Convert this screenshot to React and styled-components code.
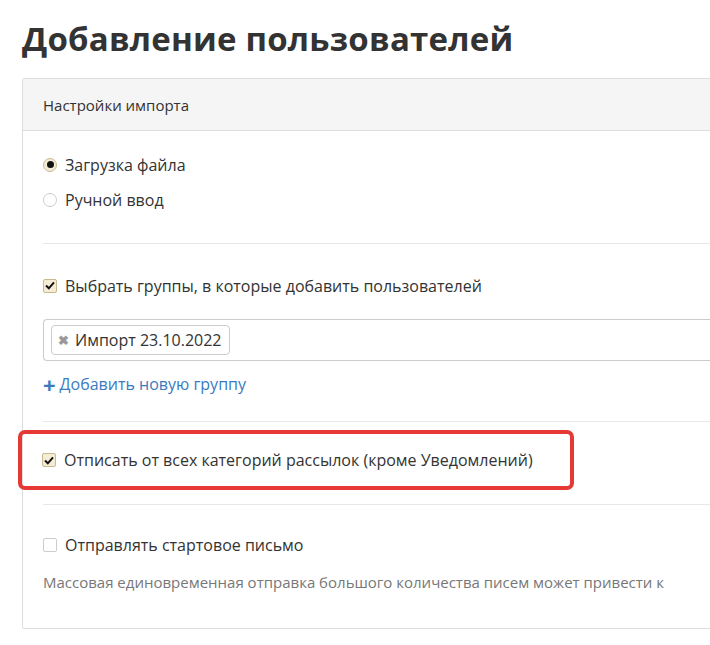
import React from "react";
import styled, { createGlobalStyle } from "styled-components";

const Global = createGlobalStyle`
  html, body { margin: 0; padding: 0; background: #fff; overflow: hidden; }
  body { font-family: "Open Sans", "Liberation Sans", sans-serif; color: #333; }
`;
const Page = styled.div`padding: 14px 0 0 22px; width: 760px;`;
const Title = styled.h1`
  margin: 0 0 14px; font-size: 33px; font-weight: 700; color: #333; line-height: 50px; letter-spacing: 0.2px;
`;
const Panel = styled.div`border: 1px solid #ddd; border-radius: 2px; width: 720px;`;
const Header = styled.div`
  background: #f5f5f5; border-bottom: 1px solid #ddd; height: 51px; display: flex; align-items: center;
  padding-left: 20px; font-size: 15px; color: #333;
`;
const Body = styled.div`padding: 16px 0 36px 20px;`;
const Row = styled.label`
  display: flex; align-items: center; gap: 8px; height: 35px; font-size: 16px; color: #333;
`;
const Radio = styled.span`
  width: 14px; height: 14px; border-radius: 50%; box-sizing: border-box;
  border: 1px solid ${p => (p.$on ? "#c9b890" : "#ccc")}; background: ${p => (p.$on ? "#f5ecd6" : "#fff")};
  display: flex; align-items: center; justify-content: center;
  &::after { content: ""; width: 7px; height: 7px; border-radius: 50%; background: #111; display: ${p => (p.$on ? "block" : "none")}; }
`;
const Box = styled.span`
  width: 14px; height: 14px; border-radius: 2px; box-sizing: border-box;
  border: 1px solid ${p => (p.$on ? "#c9b890" : "#ccc")}; background: ${p => (p.$on ? "#f5ecd6" : "#fff")};
  display: flex; align-items: center; justify-content: center;
`;
const Hr = styled.div`height: 1px; background: #e8e8e8; margin: ${p => p.$m};`;
const Input = styled.div`
  margin-top: 16px; height: 40px; border: 1px solid #ccc; border-radius: 4px; border-right: none;
  display: flex; align-items: center; padding-left: 7px;
`;
const Tag = styled.span`
  display: flex; align-items: center; gap: 6px; border: 1px solid #ccc; border-radius: 4px;
  height: 28px; padding: 0 7px 0 6px; font-size: 16px; color: #333;
`;
const X = styled.span`color: #999; font-size: 13px; font-weight: 700;`;
const Link = styled.div`
  margin-top: 12px; display: flex; align-items: center; gap: 4px; color: #3a7bbf; font-size: 16px;
`;
const Plus = styled.span`color: #3a7bbf; font-size: 22px; font-weight: 700; line-height: 16px;`;
const Highlight = styled.div`
  margin: 8px 0 0 -25px; width: 528px; height: 52px; border: 4px solid #e53935; border-radius: 7px;
  display: flex; align-items: center; padding-left: 20px;
`;
const Note = styled.div`margin-top: 10px; font-size: 15px; color: #777; white-space: nowrap; overflow: hidden; width: 666px;`;

const Check = () => (
  <svg width="10" height="9" viewBox="0 0 10 9"><path d="M1 4.5 L3.8 7.3 L9 1.3" stroke="#111" strokeWidth="2" fill="none" /></svg>
);

export default function App() {
  return (
    <Page>
      <Global />
      <Title>Добавление пользователей</Title>
      <Panel>
        <Header>Настройки импорта</Header>
        <Body>
          <Row><Radio $on />Загрузка файла</Row>
          <Row><Radio />Ручной ввод</Row>
          <Hr $m="26px 0 24px" />
          <Row><Box $on><Check /></Box>Выбрать группы, в которые добавить пользователей</Row>
          <Input><Tag><X>✖</X>Импорт 23.10.2022</Tag></Input>
          <Link><Plus>+</Plus>Добавить новую группу</Link>
          <Hr $m="26px 0 0" />
          <Highlight><Row><Box $on><Check /></Box>Отписать от всех категорий рассылок (кроме Уведомлений)</Row></Highlight>
          <Hr $m="14px 0 22px" />
          <Row><Box />Отправлять стартовое письмо</Row>
          <Note>Массовая единовременная отправка большого количества писем может привести к</Note>
        </Body>
      </Panel>
    </Page>
  );
}
